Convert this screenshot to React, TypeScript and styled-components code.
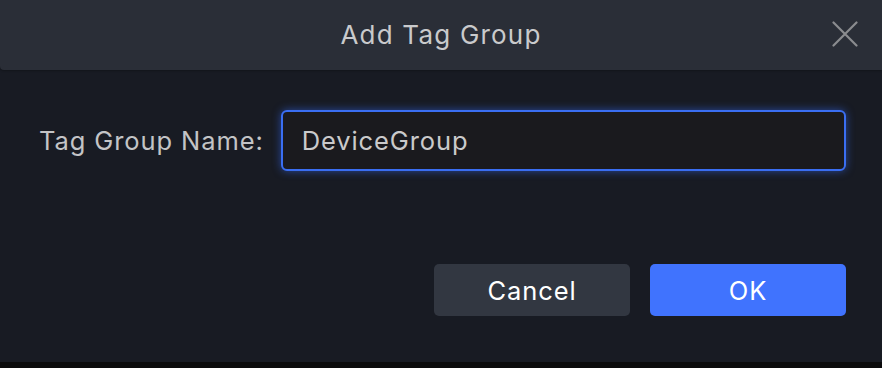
import React from 'react';
import styled, { createGlobalStyle } from "styled-components"

const GlobalStyle = createGlobalStyle`
    html, body {
        margin: 0;
        padding: 0;
        background-color: #0b0b0c;
    }
    * {
        box-sizing: border-box;
    }
`

type ButtonPropsType = {
    primary?: boolean
}

export default function App() {
    return (
        <>
            <GlobalStyle/>
            <Dialog>
                <Header>
                    <Title>Add Tag Group</Title>
                    <CloseButton aria-label="Close">
                        <svg width="26" height="26" viewBox="0 0 26 26">
                            <path d="M1.5 1.5 L24.5 24.5 M24.5 1.5 L1.5 24.5" stroke="#8b8c8f" strokeWidth="2.2" strokeLinecap="round"/>
                        </svg>
                    </CloseButton>
                </Header>
                <Body>
                    <FormRow>
                        <Label htmlFor="tag-group-name">Tag Group Name:</Label>
                        <Input id="tag-group-name" defaultValue="DeviceGroup"/>
                    </FormRow>
                </Body>
                <Footer>
                    <Button>Cancel</Button>
                    <Button primary>OK</Button>
                </Footer>
            </Dialog>
        </>
    );
}

const Dialog = styled.div`
    width: 882px;
    height: 362px;
    background-color: #181b23;
    display: flex;
    flex-direction: column;
    font-family: Inter, "Noto Sans", sans-serif;
`

const Header = styled.div`
    position: relative;
    height: 70px;
    flex-shrink: 0;
    display: flex;
    align-items: center;
    justify-content: center;
    background-color: #2a2e37;
    border-bottom-left-radius: 4px;
    box-shadow: 0 1px 2px rgba(0, 0, 0, 0.25);
`

const Title = styled.h1`
    margin: 0 0 2px 0;
    font-size: 26px;
    font-weight: 400;
    color: #c9cacc;
    letter-spacing: 1.2px;
`

const CloseButton = styled.button`
    position: absolute;
    right: 24px;
    top: 21px;
    padding: 0;
    border: none;
    background: none;
    display: flex;
    cursor: pointer;
`

const Body = styled.div`
    padding: 40px 36px 0 39px;
`

const FormRow = styled.div`
    display: flex;
    align-items: center;
    gap: 17px;
`

const Label = styled.label`
    font-size: 25.5px;
    letter-spacing: 0.9px;
    color: #c3c4c6;
    white-space: nowrap;
`

const Input = styled.input`
    flex: 1;
    height: 61px;
    padding: 0 19px;
    border: 2px solid #3a6ef2;
    border-radius: 6px;
    background-color: #1a1a1e;
    color: #cacacb;
    font-family: inherit;
    font-size: 25.5px;
    letter-spacing: 0.9px;
    outline: none;
    box-shadow: 0 0 8px rgba(52, 104, 240, 0.6);
`

const Footer = styled.div`
    display: flex;
    justify-content: flex-end;
    gap: 20px;
    padding: 93px 36px 0 0;
`

const Button = styled.button<ButtonPropsType>`
    width: 196px;
    height: 52px;
    border: none;
    border-radius: 5px;
    background-color: ${props => props.primary ? "#4073fe" : "#323741"};
    color: #ffffff;
    font-family: inherit;
    font-size: 25.5px;
    letter-spacing: 0.9px;
    cursor: pointer;
`
